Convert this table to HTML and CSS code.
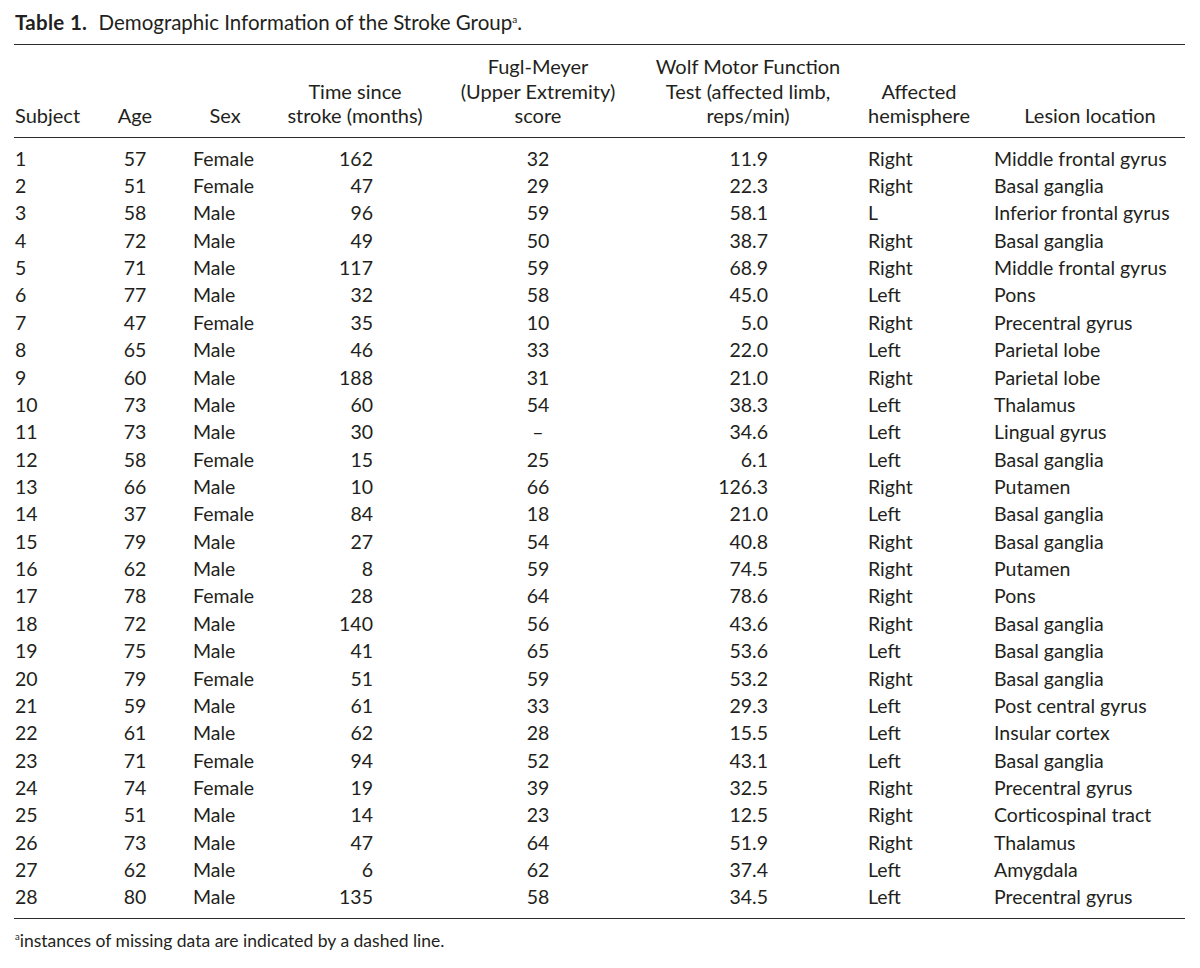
FILE: index.html
```html
<!DOCTYPE html>
<html lang="en">
<head>
<meta charset="utf-8">
<title>Table 1. Demographic Information of the Stroke Group</title>
<link rel="stylesheet" href="styles.css">
</head>
<body>
<div class="page">
  <div class="caption"><span class="label">Table 1.</span> Demographic Information of the Stroke Group<sup>a</sup>.</div>
  <table class="data">
    <colgroup>
      <col class="w1"><col class="w2"><col class="w3"><col class="w4"><col class="w5"><col class="w6"><col class="w7"><col class="w8">
    </colgroup>
    <thead>
      <tr>
        <th class="h-subj"><div class="hin left">Subject</div></th>
        <th class="h-age"><div class="hin">Age</div></th>
        <th class="h-sex"><div class="hin">Sex</div></th>
        <th class="h-time"><div class="hin"><span>Time since<br>stroke (months)</span></div></th>
        <th class="h-fm"><div class="hin"><span>Fugl-Meyer<br>(Upper Extremity)<br>score</span></div></th>
        <th class="h-wolf"><div class="hin"><span>Wolf Motor Function<br>Test (affected limb,<br>reps/min)</span></div></th>
        <th class="h-hem"><div class="hin"><span>Affected<br>hemisphere</span></div></th>
        <th class="h-les"><div class="hin"><span>Lesion location</span></div></th>
      </tr>
    </thead>
    <tbody>
      <tr><td>1</td><td>57</td><td>Female</td><td>162</td><td>32</td><td>11.9</td><td>Right</td><td>Middle frontal gyrus</td></tr>
      <tr><td>2</td><td>51</td><td>Female</td><td>47</td><td>29</td><td>22.3</td><td>Right</td><td>Basal ganglia</td></tr>
      <tr><td>3</td><td>58</td><td>Male</td><td>96</td><td>59</td><td>58.1</td><td>L</td><td>Inferior frontal gyrus</td></tr>
      <tr><td>4</td><td>72</td><td>Male</td><td>49</td><td>50</td><td>38.7</td><td>Right</td><td>Basal ganglia</td></tr>
      <tr><td>5</td><td>71</td><td>Male</td><td>117</td><td>59</td><td>68.9</td><td>Right</td><td>Middle frontal gyrus</td></tr>
      <tr><td>6</td><td>77</td><td>Male</td><td>32</td><td>58</td><td>45.0</td><td>Left</td><td>Pons</td></tr>
      <tr><td>7</td><td>47</td><td>Female</td><td>35</td><td>10</td><td>5.0</td><td>Right</td><td>Precentral gyrus</td></tr>
      <tr><td>8</td><td>65</td><td>Male</td><td>46</td><td>33</td><td>22.0</td><td>Left</td><td>Parietal lobe</td></tr>
      <tr><td>9</td><td>60</td><td>Male</td><td>188</td><td>31</td><td>21.0</td><td>Right</td><td>Parietal lobe</td></tr>
      <tr><td>10</td><td>73</td><td>Male</td><td>60</td><td>54</td><td>38.3</td><td>Left</td><td>Thalamus</td></tr>
      <tr><td>11</td><td>73</td><td>Male</td><td>30</td><td>&ndash;</td><td>34.6</td><td>Left</td><td>Lingual gyrus</td></tr>
      <tr><td>12</td><td>58</td><td>Female</td><td>15</td><td>25</td><td>6.1</td><td>Left</td><td>Basal ganglia</td></tr>
      <tr><td>13</td><td>66</td><td>Male</td><td>10</td><td>66</td><td>126.3</td><td>Right</td><td>Putamen</td></tr>
      <tr><td>14</td><td>37</td><td>Female</td><td>84</td><td>18</td><td>21.0</td><td>Left</td><td>Basal ganglia</td></tr>
      <tr><td>15</td><td>79</td><td>Male</td><td>27</td><td>54</td><td>40.8</td><td>Right</td><td>Basal ganglia</td></tr>
      <tr><td>16</td><td>62</td><td>Male</td><td>8</td><td>59</td><td>74.5</td><td>Right</td><td>Putamen</td></tr>
      <tr><td>17</td><td>78</td><td>Female</td><td>28</td><td>64</td><td>78.6</td><td>Right</td><td>Pons</td></tr>
      <tr><td>18</td><td>72</td><td>Male</td><td>140</td><td>56</td><td>43.6</td><td>Right</td><td>Basal ganglia</td></tr>
      <tr><td>19</td><td>75</td><td>Male</td><td>41</td><td>65</td><td>53.6</td><td>Left</td><td>Basal ganglia</td></tr>
      <tr><td>20</td><td>79</td><td>Female</td><td>51</td><td>59</td><td>53.2</td><td>Right</td><td>Basal ganglia</td></tr>
      <tr><td>21</td><td>59</td><td>Male</td><td>61</td><td>33</td><td>29.3</td><td>Left</td><td>Post central gyrus</td></tr>
      <tr><td>22</td><td>61</td><td>Male</td><td>62</td><td>28</td><td>15.5</td><td>Left</td><td>Insular cortex</td></tr>
      <tr><td>23</td><td>71</td><td>Female</td><td>94</td><td>52</td><td>43.1</td><td>Left</td><td>Basal ganglia</td></tr>
      <tr><td>24</td><td>74</td><td>Female</td><td>19</td><td>39</td><td>32.5</td><td>Right</td><td>Precentral gyrus</td></tr>
      <tr><td>25</td><td>51</td><td>Male</td><td>14</td><td>23</td><td>12.5</td><td>Right</td><td>Corticospinal tract</td></tr>
      <tr><td>26</td><td>73</td><td>Male</td><td>47</td><td>64</td><td>51.9</td><td>Right</td><td>Thalamus</td></tr>
      <tr><td>27</td><td>62</td><td>Male</td><td>6</td><td>62</td><td>37.4</td><td>Left</td><td>Amygdala</td></tr>
      <tr><td>28</td><td>80</td><td>Male</td><td>135</td><td>58</td><td>34.5</td><td>Left</td><td>Precentral gyrus</td></tr>
    </tbody>
  </table>
  <p class="footnote"><sup>a</sup>instances of missing data are indicated by a dashed line.</p>
</div>
</body>
</html>
```

FILE: styles.css
```css
html, body {
  margin: 0;
  padding: 0;
  background: #ffffff;
}

body {
  font-family: Lato, "Open Sans", "Liberation Sans", sans-serif;
  color: #231f20;
}

.page {
  padding: 10px 15px 0 14px;
}

.caption {
  font-size: 20.5px;
  line-height: 24px;
  height: 24px;
  margin: 0 0 10px 1px;
  white-space: nowrap;
}

.caption .label {
  font-weight: 700;
  margin-right: 6px;
  letter-spacing: 0.3px;
}

sup {
  font-size: 10px;
  line-height: 0;
  vertical-align: 7px;
}

.data {
  table-layout: fixed;
  width: 1171px;
  border-collapse: collapse;
  font-size: 19.5px;
  border-top: 1px solid #2b2b2b;
  border-bottom: 1px solid #2b2b2b;
}

.w1 { width: 86px; }
.w2 { width: 70px; }
.w3 { width: 110px; }
.w4 { width: 160px; }
.w5 { width: 196px; }
.w6 { width: 224px; }
.w7 { width: 125px; }
.w8 { width: 200px; }

.data thead th {
  font-weight: 400;
  font-size: 20px;
  vertical-align: bottom;
  padding: 9px 0 9px 0;
  line-height: 24.5px;
  border-bottom: 1px solid #2b2b2b;
}

.hin {
  display: flex;
  justify-content: center;
  white-space: nowrap;
  text-align: center;
}

.hin span {
  flex: none;
}

.hin.left {
  justify-content: flex-start;
}

.h-subj { padding-left: 1px !important; }
.h-time { padding-right: 10px !important; }
.h-hem { padding-right: 7px !important; }
.h-les { padding-left: 10px !important; }

.data tbody td {
  height: 27.37px;
  padding: 0;
  line-height: 27px;
  white-space: nowrap;
}

.data tbody tr:first-child td {
  padding-top: 7px;
}

.data tbody tr:last-child td {
  padding-bottom: 7px;
}

.data tbody td:nth-child(1) { padding-left: 1px; text-align: left; }
.data tbody td:nth-child(2) { text-align: center; }
.data tbody td:nth-child(3) { padding-left: 23px; text-align: left; }
.data tbody td:nth-child(4) { padding-right: 67px; text-align: right; }
.data tbody td:nth-child(5) { text-align: center; }
.data tbody td:nth-child(6) { padding-right: 92px; text-align: right; }
.data tbody td:nth-child(7) { padding-left: 8px; text-align: left; }
.data tbody td:nth-child(8) { padding-left: 9px; text-align: left; }

.footnote {
  margin: 10px 0 0 1px;
  font-size: 17.5px;
  line-height: 24px;
}

.footnote sup {
  font-size: 9.5px;
  vertical-align: 7px;
}
```
